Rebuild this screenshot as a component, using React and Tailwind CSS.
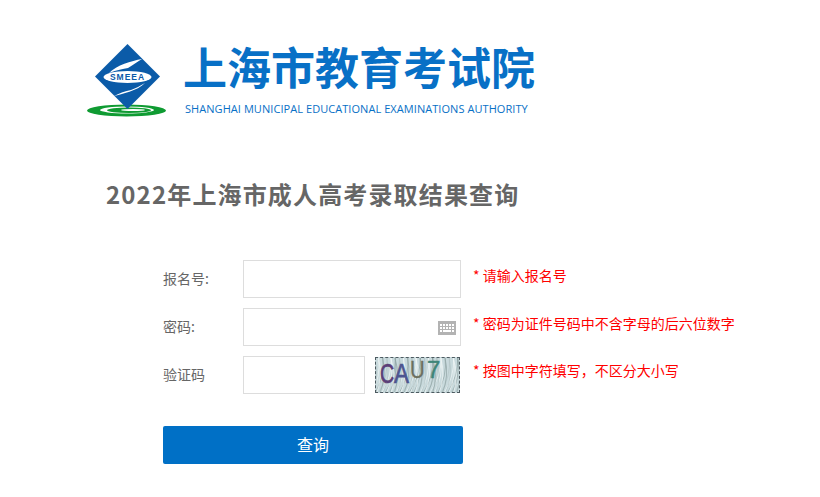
import { useState } from "react";

const cjk = "font-['Noto_Sans_CJK_SC','Noto_Sans',sans-serif]";

function Logo() {
  return (
    <svg width="80" height="73" viewBox="0 0 80 73" className="shrink-0">
      {/* green base */}
      <ellipse cx="39.5" cy="66.5" rx="39.5" ry="6" fill="#0f9b32" />
      <ellipse cx="40" cy="66" rx="27" ry="3.4" fill="#ffffff" />
      <ellipse cx="42" cy="66.2" rx="22" ry="2.8" fill="#0f9b32" />
      <ellipse cx="46" cy="66" rx="12" ry="1.1" fill="#ffffff" />
      {/* diamond */}
      <polygon points="40.5,0 73,32.5 40.5,65 8,32.5" fill="#0b5ba8" />
      {/* swooshes */}
      <path d="M55 15 C44 17 30 21 22 29 C30 26 36 25 41 24 C46 21 50 18 55 15Z" fill="#ffffff" />
      <path d="M58 39 C53 42 49 44 44 46 C38 47 33 49 27 52 C35 50 50 47 58 39Z" fill="#ffffff" />
      {/* oval */}
      <ellipse cx="40.5" cy="33" rx="24" ry="6" fill="#ffffff" />
      <text x="40.5" y="36.2" textAnchor="middle" fontSize="8.5" fontWeight="700" fill="#0b5ba8" fontFamily="'Liberation Sans',sans-serif" letterSpacing="1">
        SMEEA
      </text>
    </svg>
  );
}

function KeyboardIcon() {
  return (
    <svg width="18" height="14" viewBox="0 0 18 14" className="absolute right-[5px] top-[13px]">
      <rect width="18" height="14" fill="#b3b3b3" />
      <g fill="#ffffff">
        <rect x="2" y="3" width="2" height="2" />
        <rect x="5" y="3" width="2" height="2" />
        <rect x="8" y="3" width="2" height="2" />
        <rect x="11" y="3" width="2" height="2" />
        <rect x="14" y="3" width="2" height="2" />
        <rect x="2" y="6" width="2" height="2" />
        <rect x="5" y="6" width="2" height="2" />
        <rect x="8" y="6" width="2" height="2" />
        <rect x="11" y="6" width="2" height="2" />
        <rect x="14" y="6" width="2" height="2" />
        <rect x="2" y="9" width="2" height="2" />
        <rect x="5" y="9" width="8" height="2" />
        <rect x="14" y="9" width="2" height="2" />
      </g>
    </svg>
  );
}

function Captcha() {
  const lines = [];
  for (let i = 0; i < 60; i++) {
    const x = -6 + i * 1.6;
    const lean = (i * 7) % 13;
    lines.push(
      <path
        key={i}
        d={`M${x} 36 Q${x + 6 + lean / 2} 18 ${x + lean} 0`}
        stroke={i % 3 === 0 ? "#8fa3a3" : i % 3 === 1 ? "#f1f6f6" : "#b3c4c6"}
        strokeWidth="0.7"
        fill="none"
      />
    );
  }
  return (
    <div className="relative ml-[10px] h-[36px] w-[85px] overflow-hidden border border-dashed border-[#4d5a60] bg-[#c9dadd]">
      <svg width="85" height="36" className="absolute left-0 top-0">{lines}</svg>
      <span className="absolute left-[4px] top-[0px] origin-left scale-x-[0.7] font-['Liberation_Sans',sans-serif] text-[28px] leading-[32px] text-[#5b3f78] [-webkit-text-stroke:0.7px_#5b3f78]">C</span>
      <span className="absolute left-[18px] top-[0px] origin-left scale-x-[0.8] font-['Liberation_Sans',sans-serif] text-[28px] leading-[32px] text-[#4d5590] [-webkit-text-stroke:0.7px_#4d5590]">A</span>
      <span className="absolute left-[34px] top-[-3px] origin-left scale-x-[0.85] font-['Liberation_Sans',sans-serif] text-[24px] leading-[30px] text-[#6c7060] [-webkit-text-stroke:0.3px_#6c7060]">U</span>
      <span className="absolute left-[51px] top-[-3px] font-['Liberation_Sans',sans-serif] text-[24px] leading-[30px] text-[#3f8578] [-webkit-text-stroke:0.5px_#3f8578]">7</span>
    </div>
  );
}

function Row({ label, hint, hintCls, children }) {
  return (
    <div className="flex h-[38px] items-center">
      <label className="-mt-[2px] w-[80px] text-[14px] text-[#666666]">{label}</label>
      {children}
      <span className={`absolute left-[473px] text-[14px] leading-[20px] text-[#ff0000] ${hintCls}`}>{hint}</span>
    </div>
  );
}

export default function App() {
  const [no, setNo] = useState("");
  const [pwd, setPwd] = useState("");
  const [code, setCode] = useState("");

  const inputCls = "h-[38px] border border-[#dddddd] bg-white px-2 text-[14px] outline-none";

  return (
    <div className={`h-[497px] w-[820px] overflow-hidden bg-white ${cjk}`}>
      {/* header */}
      <div className="flex pl-[87px] pt-[44px]">
        <Logo />
        <div className="ml-[16px]">
          <div className="text-[44px] font-bold leading-[44px] text-[#0870c6]">上海市教育考试院</div>
          <div className="ml-[2px] mt-[13px] font-['Open_Sans',sans-serif] text-[11px] leading-[16px] tracking-[0.06px] text-[#0870c6]">
            SHANGHAI MUNICIPAL EDUCATIONAL EXAMINATIONS AUTHORITY
          </div>
        </div>
      </div>

      <h1 className="ml-[106px] mt-[57px] text-[24px] font-bold leading-[40px] tracking-[1.15px] text-[#666666]">
        2022年上海市成人高考录取结果查询
      </h1>

      {/* form */}
      <div className="ml-[163px] mt-[46px] flex flex-col gap-[10px]">
        <Row label="报名号:" hint="* 请输入报名号" hintCls="-mt-[8px]">
          <input value={no} onChange={(e) => setNo(e.target.value)} className={`${inputCls} w-[218px]`} />
        </Row>
        <Row label="密码:" hint="* 密码为证件号码中不含字母的后六位数字" hintCls="-mt-[8px]">
          <div className="relative">
            <input type="password" value={pwd} onChange={(e) => setPwd(e.target.value)} className={`${inputCls} w-[218px]`} />
            <KeyboardIcon />
          </div>
        </Row>
        <Row label="验证码" hint="* 按图中字符填写，不区分大小写" hintCls="-mt-[10px]">
          <input value={code} onChange={(e) => setCode(e.target.value)} className={`${inputCls} w-[122px]`} />
          <Captcha />
        </Row>
      </div>

      <button className="ml-[163px] mt-[32px] h-[38px] w-[300px] rounded-[2px] bg-[#0070c6] pb-[2px] text-[16px] text-white">查询</button>
    </div>
  );
}
